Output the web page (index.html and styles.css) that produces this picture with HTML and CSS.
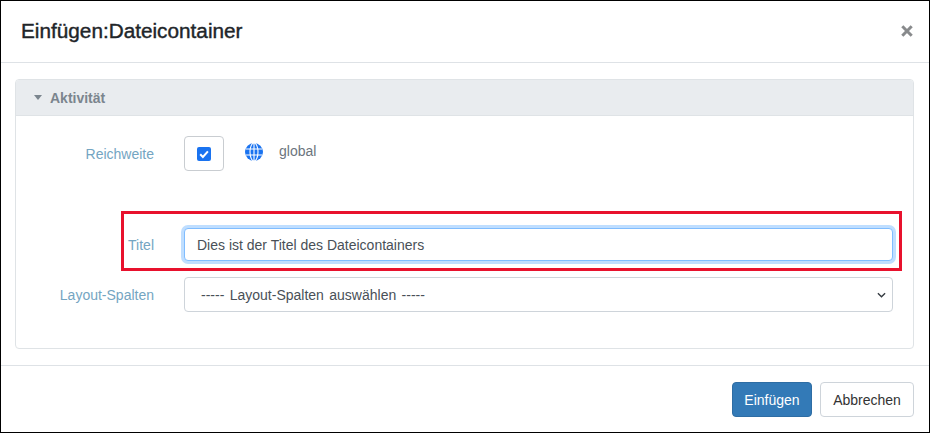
FILE: index.html
```html
<!DOCTYPE html>
<html lang="de">
<head>
<meta charset="utf-8">
<title>Einfügen:Dateicontainer</title>
<link rel="stylesheet" href="styles.css">
</head>
<body>
<div class="dialog">
  <header class="dialog-header">
    <h1 class="dialog-title">Einfügen:Dateicontainer</h1>
    <svg class="close" viewBox="0 0 12 12" width="12" height="12" aria-label="Schließen"><path d="M1.3 1.3 L10.7 10.7 M10.7 1.3 L1.3 10.7" stroke="#888a8c" stroke-width="3" fill="none"/></svg>
  </header>
  <main class="dialog-body">
    <section class="panel">
      <div class="panel-heading">
        <span class="caret"></span>
        <span class="panel-title">Aktivität</span>
      </div>
      <div class="panel-body">
        <div class="row row-scope">
          <label class="label">Reichweite</label>
          <div class="check-box">
            <svg class="check" viewBox="0 0 14 14" width="14" height="14"><rect width="14" height="14" rx="2" fill="#1a73f0"/><path d="M3.2 7.3 L5.9 10 L10.9 4.4" stroke="#fff" stroke-width="2" fill="none"/></svg>
          </div>
          <svg class="globe" viewBox="0 0 18 18" width="18" height="18"><circle cx="9" cy="9" r="9" fill="#1a73f0"/><g stroke="#fff" stroke-width="1.1" fill="none"><ellipse cx="9" cy="9" rx="4" ry="9"/><path d="M9 0 V18 M0.5 6 H17.5 M0.5 12 H17.5"/></g></svg>
          <span class="scope-text">global</span>
        </div>
        <div class="row row-title">
          <label class="label">Titel</label>
          <input class="input" type="text" value="Dies ist der Titel des Dateicontainers">
          <div class="highlight"></div>
        </div>
        <div class="row row-select">
          <label class="label">Layout-Spalten</label>
          <div class="select">
            <span class="select-text">----- Layout-Spalten auswählen -----</span>
            <svg class="chevron" viewBox="0 0 10 6" width="9" height="6"><path d="M1 1 L5 5 L9 1" stroke="#343a40" stroke-width="1.5" fill="none"/></svg>
          </div>
        </div>
      </div>
    </section>
  </main>
  <footer class="dialog-footer">
    <button class="btn btn-primary">Einfügen</button>
    <button class="btn btn-default">Abbrechen</button>
  </footer>
</div>
</body>
</html>
```
FILE: styles.css
```css
* { box-sizing: border-box; }
html, body { margin: 0; padding: 0; background: #fff; }
body { font-family: "Liberation Sans", Arial, sans-serif; font-size: 14px; color: #495057; }
.dialog { width: 930px; height: 433px; border: 1px solid #000; background: #fff; display: flex; flex-direction: column; overflow: hidden; }
.dialog-header { height: 62px; flex: none; border-bottom: 1px solid #dee2e6; display: flex; align-items: center; justify-content: space-between; padding: 0 16px 1px 20px; }
.dialog-title { margin: 0; font-size: 20.75px; line-height: 24px; font-weight: 400; color: #212529; -webkit-text-stroke: 0.4px #212529; }
.close { display: block; }
.dialog-body { flex: none; height: 303px; padding: 16px 15px 0 14px; border-bottom: 1px solid #dee2e6; }
.panel { height: 270px; border: 1px solid #dfe3e6; border-radius: 4px; }
.panel-heading { height: 36px; background: #e9ecef; border-bottom: 1px solid #dfe3e6; display: flex; align-items: center; padding-left: 18px; gap: 8px; border-radius: 3px 3px 0 0; }
.caret { width: 0; height: 0; border-left: 4.5px solid transparent; border-right: 4.5px solid transparent; border-top: 5px solid #7b858e; }
.panel-title { font-size: 14px; font-weight: 700; color: #7b858e; }
.panel-body { display: flex; flex-direction: column; padding-top: 20px; }
.row { display: flex; align-items: center; }
.label { width: 138px; margin-right: 30px; text-align: right; font-size: 14px; color: #74a5c2; flex: none; }
.row-scope { height: 35px; }
.check-box { width: 40px; height: 35px; border: 1px solid #c9cdd1; border-radius: 4px; display: flex; align-items: center; justify-content: center; flex: none; }
.check { display: block; }
.globe { margin: -4px 0 0 21px; flex: none; display: block; }
.scope-text { margin: -5px 0 0 16px; font-size: 14px; color: #6c757d; }
.row-title { position: relative; height: 33px; margin-top: 57px; }
.input { width: 709px; height: 33px; border: 1px solid #80bdff; border-radius: 4px; box-shadow: 0 0 0 3px #bfdeff; padding: 0 12px; font: 14px "Liberation Sans", Arial, sans-serif; color: #495057; outline: none; }
.highlight { position: absolute; left: 105px; top: -17px; width: 781px; height: 60px; border: 3px solid #e8112d; pointer-events: none; }
.row-select { height: 35px; margin-top: 16px; }
.select { width: 709px; height: 35px; border: 1px solid #ced4da; border-radius: 4px; display: flex; align-items: center; justify-content: space-between; padding: 0 6px 0 16px; font-size: 14px; color: #495057; }
.select-text { word-spacing: 1.5px; }
.chevron { display: block; }
.dialog-footer { flex: 1; display: flex; justify-content: flex-end; align-items: flex-start; gap: 8px; padding: 16px 15px 0 0; }
.btn { height: 35px; border-radius: 4px; font: 14px "Liberation Sans", Arial, sans-serif; padding: 0; }
.btn-primary { width: 80px; background: #337ab7; border: 1px solid #2e6da4; color: #fff; }
.btn-default { width: 94px; background: #fff; border: 1px solid #ced4da; color: #333; }
```
